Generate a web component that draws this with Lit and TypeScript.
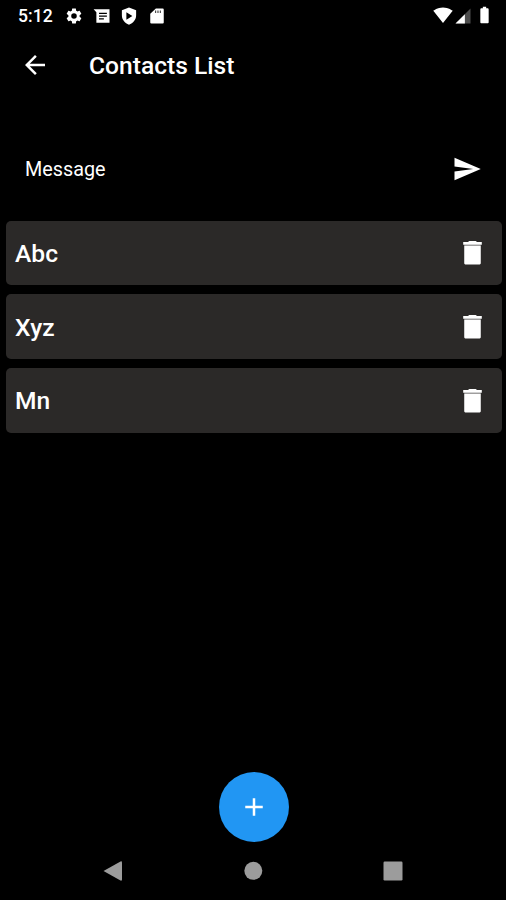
import { LitElement, html, css, svg } from "lit";
import { customElement, property, state } from "lit/decorators.js";

const paths: Record<string, unknown> = {
  back: svg`<path d="M20 11H7.83l5.59-5.59L12 4l-8 8 8 8 1.41-1.41L7.83 13H20v-2z"/>`,
  send: svg`<path d="M2.01 21L23 12 2.01 3 2 10l15 2-15 2z"/>`,
  trash: svg`<path d="M5.600 20.400q0 .8.800.8h11.200q.8 0 .8-.8V7H5.600zM19.200 3.900h-3.700l-1-.9h-5l-1 .9H4.800V6h14.400z"/><path fill-opacity=".55" d="M5.600 6h12.800v1H5.600z"/>`,
  add: svg`<path d="M19 13h-6v6h-2v-6H5v-2h6V5h2v6h6v2z"/>`,
  gear: svg`<path fill-rule="evenodd" d="M19.43 12.98c.04-.32.07-.64.07-.98s-.03-.66-.07-.98l2.11-1.65c.19-.15.24-.42.12-.64l-2-3.46c-.12-.22-.39-.3-.61-.22l-2.49 1c-.52-.4-1.08-.73-1.69-.98l-.38-2.65C14.46 2.18 14.25 2 14 2h-4c-.25 0-.46.18-.49.42l-.38 2.65c-.61.25-1.17.59-1.69.98l-2.49-1c-.23-.09-.49 0-.61.22l-2 3.46c-.13.22-.07.49.12.64l2.11 1.65c-.04.32-.07.65-.07.98s.03.66.07.98l-2.11 1.65c-.19.15-.24.42-.12.64l2 3.46c.12.22.39.3.61.22l2.49-1c.52.4 1.08.73 1.69.98l.38 2.65c.03.24.24.42.49.42h4c.25 0 .46-.18.49-.42l.38-2.65c.61-.25 1.17-.59 1.69-.98l2.49 1c.23.09.49 0 .61-.22l2-3.46c.12-.22.07-.49-.12-.64l-2.11-1.65zM12 15.700a3.700 3.700 0 1 1 0-7.400 3.700 3.700 0 0 1 0 7.400z"/>`,
  message: svg`<path fill-rule="evenodd" d="M.8 3H22V21H4.500V7zM8 7.500V9.300H18.500V7.500zM8 11.200V13H18.500V11.200zM8 14.900V16.700H14.500V14.900z"/>`,
  shield: svg`<path fill-rule="evenodd" d="M12 .5L2.500 4.300V11c0 6 4 10.600 9.500 12.500 5.500-1.900 9.500-6.500 9.500-12.500V4.300zM8.500 7L16.500 12 8.500 17z"/>`,
  sd: svg`<path d="M19.500 2h-9L3 9v11.500q0 1.500 1.500 1.500h15q1.500 0 1.500-1.500v-17Q21 2 19.500 2z"/><path fill="#000" fill-opacity=".7" d="M9.300 4.800h1.600v3.200H9.300zM12.500 4.800h1.600v3.200h-1.600zM15.700 4.800h1.600v3.200h-1.600z"/>`,
  wifi: svg`<path d="M12.010 21.490L23.640 7c-.45-.34-4.930-4-11.640-4C5.280 3 .81 6.660.36 7l11.630 14.490.010.010.010-.010z"/>`,
  signal: svg`<path fill-opacity=".3" d="M2 22h20V2z"/><path d="M2 22h12.500V9.500z"/>`,
  battery: svg`<path d="M15.670 4H14V2h-4v2H8.330C7.600 4 7 4.600 7 5.330v15.330C7 21.400 7.600 22 8.330 22h7.330c.74 0 1.340-.6 1.340-1.330V5.330C17 4.600 16.400 4 15.670 4z"/>`,
  navBack: svg`<path d="M2.500 12L19.500 2.400Q21 1.800 21 3.400V20.600Q21 22.200 19.500 21.600z"/>`,
  navHome: svg`<circle cx="12.300" cy="11.800" r="9"/>`,
  navRecent: svg`<rect x="2.500" y="2.500" width="19" height="19" rx="1.200"/>`,
};

@customElement("ui-icon")
export class UiIcon extends LitElement {
  @property() name = "";
  static styles = css`
    :host { display: block; width: 30px; height: 30px; flex: none; }
    svg { display: block; width: 100%; height: 100%; fill: currentColor; }
  `;
  render() {
    return html`<svg viewBox="0 0 24 24" aria-hidden="true">${paths[this.name]}</svg>`;
  }
}

@customElement("app-root")
export class AppRoot extends LitElement {
  @state() private contacts = ["Abc", "Xyz", "Mn"];

  static styles = css`
    :host {
      display: flex;
      flex-direction: column;
      height: 900px;
      box-sizing: border-box;
      overflow: hidden;
      background: #000;
      color: #fff;
      font-family: Roboto, "Liberation Sans", sans-serif;
    }
    button {
      display: block;
      padding: 0;
      border: 0;
      background: none;
      color: inherit;
    }
    .status {
      display: flex;
      align-items: center;
      justify-content: space-between;
      height: 31px;
      padding: 0 15.500px 0 18px;
      flex: none;
    }
    .group { display: flex; align-items: center; }
    .time { font-size: 17.600px; font-weight: 500; width: 47px; line-height: 31px; padding-top: 2px; }
    .status ui-icon { width: 18px; height: 18px; }
    .status .gap { margin-right: 9.500px; }
    .status .wifi { width: 20px; height: 20px; margin-right: 1px; margin-top: -1px; }
    .status .signal { margin-right: 1.500px; }
    .status .battery { width: 21px; height: 20px; margin-right: -4px; margin-top: -1px; }
    .bar {
      display: flex;
      align-items: center;
      height: 68px;
      padding-left: 20px;
      gap: 39px;
      flex: none;
    }
    h1 { margin: 0; font-size: 24.600px; font-weight: 500; line-height: 30px; padding-top: 1px; }
    .compose {
      display: flex;
      align-items: center;
      justify-content: space-between;
      height: 60px;
      margin-top: 40px;
      padding: 0 24px 0 25px;
      flex: none;
    }
    .label { font-size: 19.800px; line-height: 24px; padding-top: 2px; }
    .list {
      display: flex;
      flex-direction: column;
      gap: 9px;
      margin: 21.500px 4px 0 5.500px;
      flex: 1;
    }
    .card {
      display: flex;
      align-items: center;
      justify-content: space-between;
      height: 64.800px;
      padding: 0 14px 0 9.500px;
      box-sizing: border-box;
      border-radius: 5px;
      background: #2b2928;
      font-size: 24.600px;
      font-weight: 500;
    }
    .card span { padding-top: 1px; }
    .card ui-icon { width: 31px; height: 31px; }
    .fab {
      display: grid;
      place-items: center;
      width: 70px;
      height: 70px;
      margin-left: 218.500px;
      border-radius: 50%;
      background: #2196f3;
      flex: none;
    }
    .nav {
      display: flex;
      justify-content: space-between;
      height: 58px;
      padding: 17px 101px 0;
      box-sizing: border-box;
      color: #9c9c9c;
      flex: none;
    }
    .nav ui-icon { width: 24px; height: 24px; }
  `;

  private remove(name: string) {
    this.contacts = this.contacts.filter((c) => c !== name);
  }

  render() {
    return html`
      <div class="status">
        <div class="group">
          <span class="time">5:12</span>
          <ui-icon class="gap" name="gear"></ui-icon>
          <ui-icon class="gap" name="message"></ui-icon>
          <ui-icon class="gap" name="shield"></ui-icon>
          <ui-icon name="sd"></ui-icon>
        </div>
        <div class="group">
          <ui-icon class="wifi" name="wifi"></ui-icon>
          <ui-icon class="signal" name="signal"></ui-icon>
          <ui-icon class="battery" name="battery"></ui-icon>
        </div>
      </div>
      <header class="bar">
        <button aria-label="Back"><ui-icon name="back"></ui-icon></button>
        <h1>Contacts List</h1>
      </header>
      <div class="compose">
        <span class="label">Message</span>
        <button aria-label="Send"><ui-icon name="send"></ui-icon></button>
      </div>
      <main class="list">
        ${this.contacts.map(
          (name) => html`
            <div class="card">
              <span>${name}</span>
              <button aria-label="Delete" @click=${() => this.remove(name)}>
                <ui-icon name="trash"></ui-icon>
              </button>
            </div>
          `
        )}
      </main>
      <button class="fab" aria-label="Add"><ui-icon name="add"></ui-icon></button>
      <nav class="nav">
        <ui-icon name="navBack"></ui-icon>
        <ui-icon name="navHome"></ui-icon>
        <ui-icon name="navRecent"></ui-icon>
      </nav>
    `;
  }
}
